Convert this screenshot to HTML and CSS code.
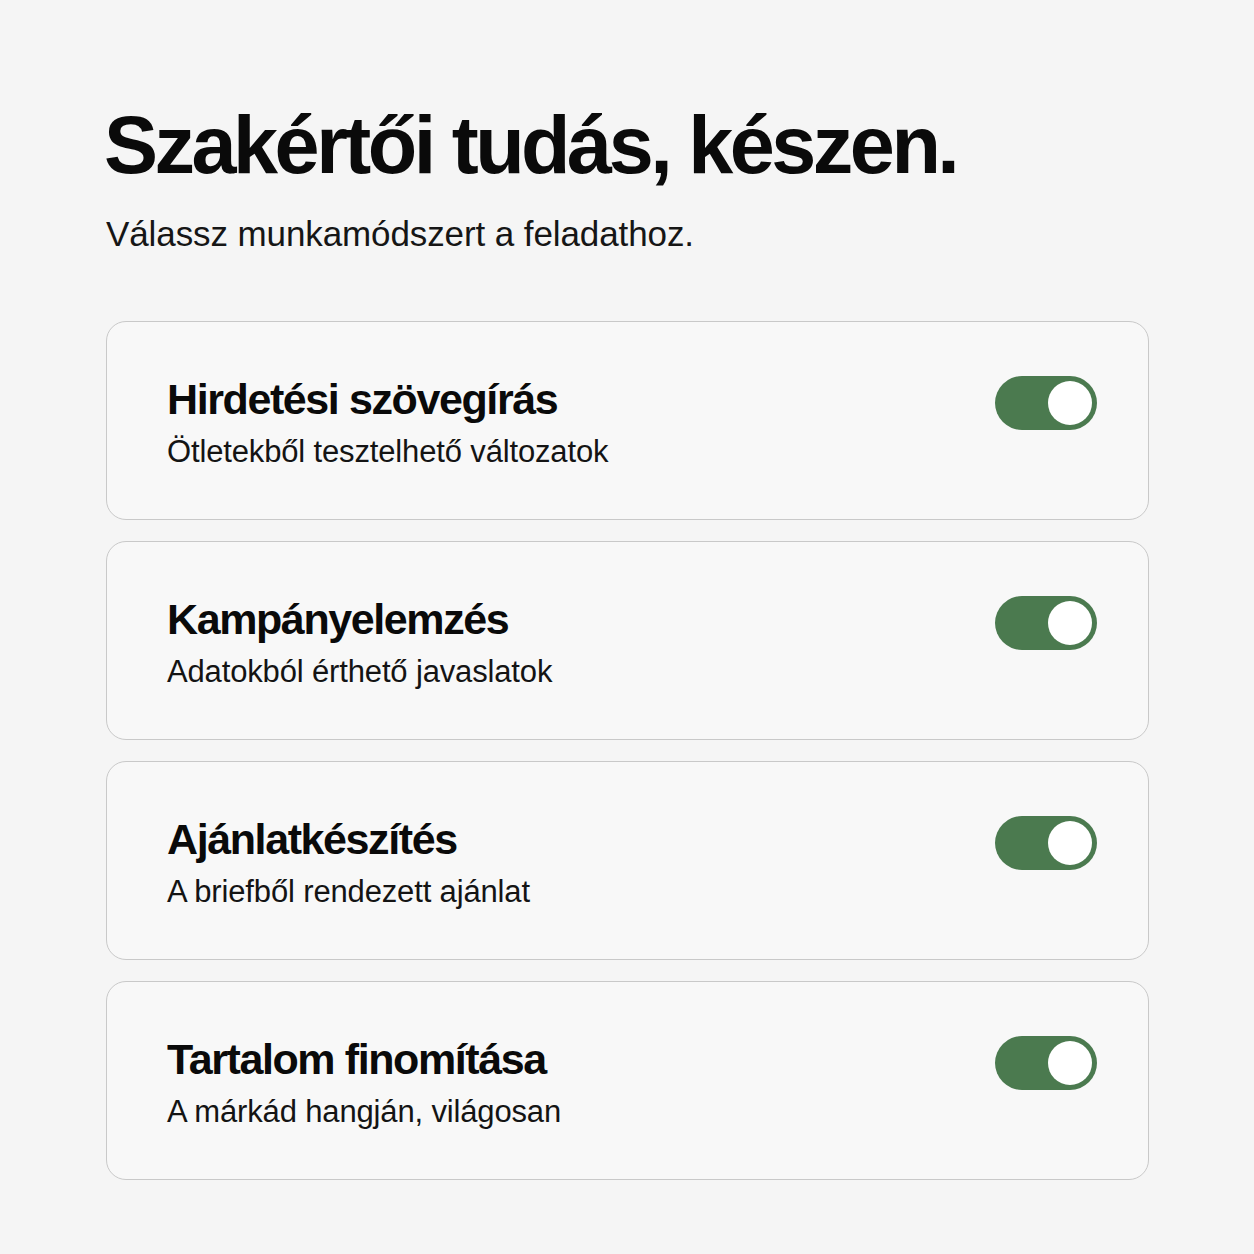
FILE: index.html
```html
<!DOCTYPE html>
<html lang="hu">
<head>
  <meta charset="UTF-8" />
  <meta name="viewport" content="width=device-width, initial-scale=1.0" />
  <title>Szakértői tudás</title>
  <link rel="stylesheet" href="styles.css">
</head>
<body>
  <div class="container">
    <h1>Szakértői tudás, készen.</h1>
    <p class="lead">Válassz munkamódszert a feladathoz.</p>

    <div class="cards">
      <div class="card">
        <div class="card-text">
          <h3>Hirdetési szövegírás</h3>
          <p>Ötletekből tesztelhető változatok</p>
        </div>
        <span class="toggle on"><span class="knob"></span></span>
      </div>

      <div class="card">
        <div class="card-text">
          <h3>Kampányelemzés</h3>
          <p>Adatokból érthető javaslatok</p>
        </div>
        <span class="toggle on"><span class="knob"></span></span>
      </div>

      <div class="card">
        <div class="card-text">
          <h3>Ajánlatkészítés</h3>
          <p>A briefből rendezett ajánlat</p>
        </div>
        <span class="toggle on"><span class="knob"></span></span>
      </div>

      <div class="card">
        <div class="card-text">
          <h3>Tartalom finomítása</h3>
          <p>A márkád hangján, világosan</p>
        </div>
        <span class="toggle on"><span class="knob"></span></span>
      </div>
    </div>
  </div>
</body>
</html>
```

FILE: styles.css
```css
html {
  font-size: 16px;
}

body {
  margin: 0;
  background: #f5f5f5;
  color: #0a0a0a;
  font-family: "Liberation Sans", Arial, sans-serif;
}

.container {
  padding: 100px 106px 0 106px;
}

h1 {
  margin: 0 0 0 -2px;
  font-size: 81px;
  font-weight: bold;
  letter-spacing: -3.5px;
  line-height: 90px;
}

.lead {
  margin: 23px 0 0 0;
  font-size: 35px;
  line-height: 42px;
  letter-spacing: -0.1px;
  color: #161616;
}

.cards {
  display: flex;
  flex-direction: column;
  gap: 21px;
  margin-top: 66px;
  width: 1043px;
}

.card {
  box-sizing: border-box;
  height: 199px;
  display: flex;
  align-items: flex-start;
  justify-content: space-between;
  padding: 53px 51px 0 60px;
  background: #f8f8f8;
  border: 1.5px solid #c9c9c9;
  border-radius: 20px;
}

.card-text h3 {
  margin: 0;
  font-size: 43px;
  font-weight: bold;
  letter-spacing: -1.4px;
  line-height: 48px;
}

.card-text p {
  margin: 11px 0 0 0;
  font-size: 31px;
  line-height: 36px;
  letter-spacing: -0.15px;
  color: #141414;
}

.toggle {
  position: relative;
  display: block;
  width: 102px;
  height: 54px;
  border-radius: 27px;
  background: #4b7a4f;
  margin-top: 1px;
}

.toggle .knob {
  position: absolute;
  top: 5px;
  right: 5px;
  width: 44px;
  height: 44px;
  border-radius: 50%;
  background: #fff;
}
```
